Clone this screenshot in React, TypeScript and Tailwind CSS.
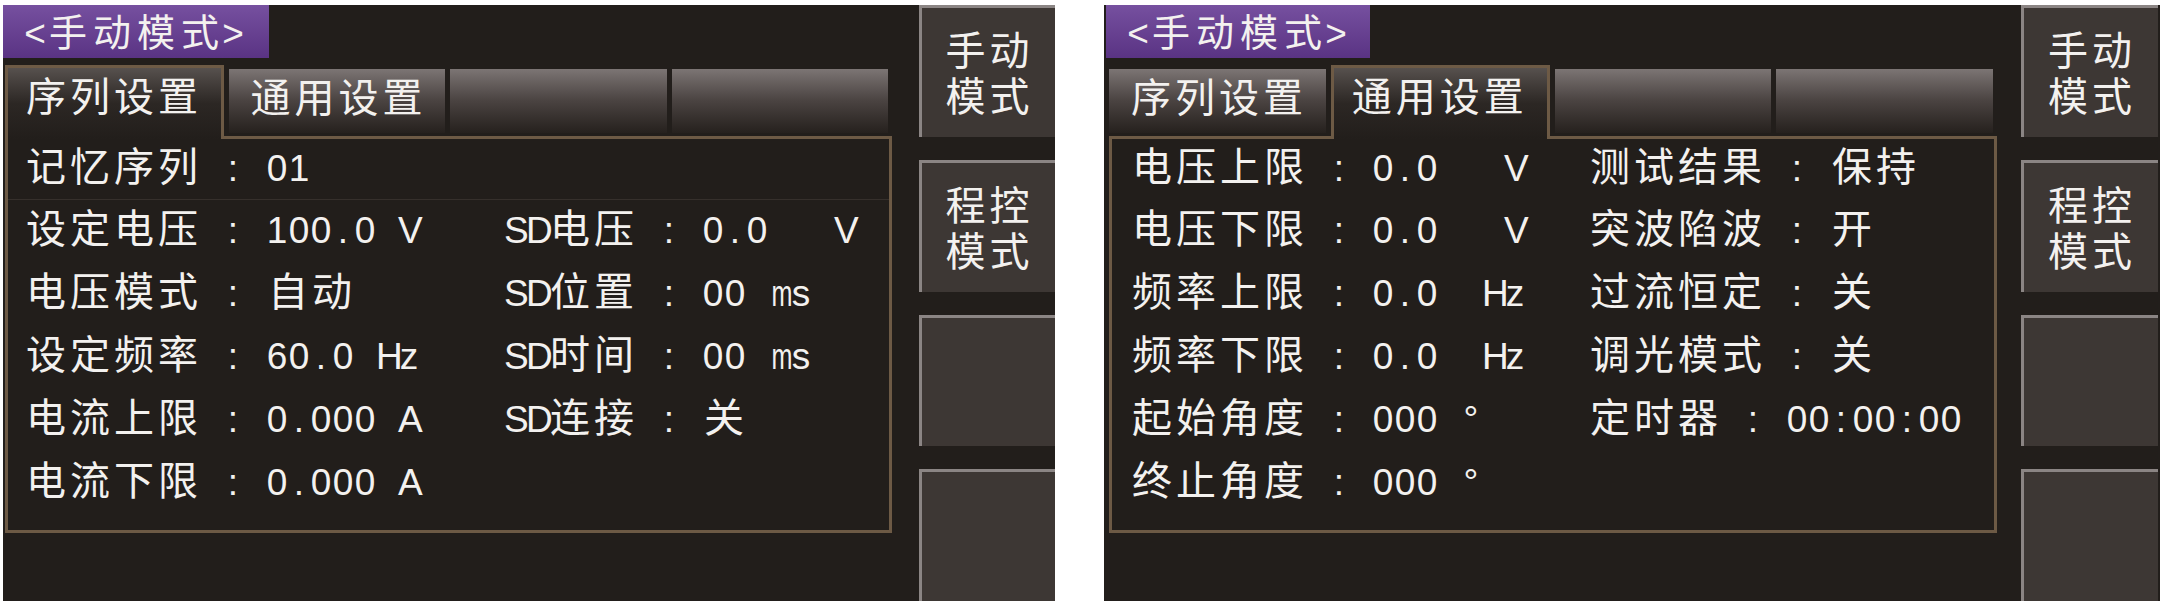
import React from "react";

type CellsProps = { text: string; small?: boolean };

function Cells({ text, small }: CellsProps) {
  return (
    <span className="whitespace-nowrap">
      {Array.from(text).map((ch, i) => {
        if (ch === " ") {
          return (
            <span key={i} className="inline-block w-[22px]">
              {"\u00a0"}
            </span>
          );
        }
        const wide = ch.charCodeAt(0) > 0x2e80;
        if (wide) {
          return (
            <span
              key={i}
              className={
                small
                  ? "inline-block w-[44px] text-center font-['Noto_Sans_CJK_SC',sans-serif] text-[38px]"
                  : "inline-block w-[44px] text-center font-['Noto_Sans_CJK_SC',sans-serif] text-[40px]"
              }
            >
              {ch}
            </span>
          );
        }
        if (ch === "m") {
          return (
            <span
              key={i}
              className="inline-block w-[22px] text-center font-['Liberation_Sans',sans-serif] text-[37px] scale-x-[0.68]"
            >
              {ch}
            </span>
          );
        }
        return (
          <span
            key={i}
            className="inline-block w-[22px] text-center font-['Liberation_Sans',sans-serif] text-[37px]"
          >
            {ch}
          </span>
        );
      })}
    </span>
  );
}

function Tab({ label, active }: { label?: string; active?: boolean }) {
  if (active) {
    return (
      <div className="relative z-10 flex-1 h-[74px] -mb-[3px] border-l-[3px] border-t-[3px] border-r-[3px] border-[#6d5a45] bg-linear-to-b from-[#57514e] via-[#2c2724] to-[#221e1b] flex items-center pl-[16px] pb-[8px] leading-[44px]">
        {label ? <Cells text={label} /> : null}
      </div>
    );
  }
  return (
    <div className="flex-1 h-[64px] mb-[3px] bg-linear-to-b from-[#7c7574] via-[#4a4341] to-[#26211e] flex items-center pl-[20px] pb-[2px] leading-[44px]">
      {label ? <Cells text={label} /> : null}
    </div>
  );
}

function SideButton({ label }: { label?: string }) {
  return (
    <div className="flex-1 min-h-0 overflow-hidden bg-[#3d3734] border-l-[3px] border-t-[3px] border-[#8b8584] flex flex-col items-center pt-[17px]">
      {label ? (
        <p className="w-[100px] pl-[7px] break-all text-left leading-[46px] tracking-[4px] font-['Noto_Sans_CJK_SC',sans-serif] text-[40px]">
          {label}
        </p>
      ) : null}
    </div>
  );
}

type ScreenProps = {
  left: boolean;
  activeTab: number;
  rows: [string, string][];
  firstRow: [string, string];
  separator: boolean;
};

function Screen({ left, activeTab, rows, firstRow, separator }: ScreenProps) {
  const tabs = ["序列设置", "通用设置", "", ""];
  const col1 = left ? "w-[480px] shrink-0" : "w-[458px] shrink-0";
  return (
    <div
      className={
        left
          ? "w-[1052px] h-[596px] bg-[#221e1b] flex text-[#f3f1ef]"
          : "w-[1056px] h-[596px] bg-[#221e1b] flex text-[#f3f1ef]"
      }
    >
      <div className={left ? "w-[916px] flex flex-col" : "w-[917px] flex flex-col"}>
        <div
          className={
            left
              ? "w-[266px] h-[53px] bg-linear-to-b from-[#76509f] to-[#5a3384] flex items-center pl-[21px] pt-[6px]"
              : "ml-[2px] w-[264px] h-[53px] bg-linear-to-b from-[#76509f] to-[#5a3384] flex items-center pl-[21px] pt-[6px]"
          }
        >
          <div className="h-[44px] flex items-center leading-[44px]">
            <Cells text="<手动模式>" small />
          </div>
        </div>
        <div className={left ? "pl-[2px] w-[889px] mt-[7px]" : "pl-[5px] w-[893px] mt-[7px]"}>
          <div className="flex items-end gap-[5px] pr-[4px]">
            {tabs.map((t, i) => (
              <Tab key={i} label={t || undefined} active={i === activeTab} />
            ))}
          </div>
          <div
            className={
              left
                ? "relative z-0 h-[397px] border-[3px] border-[#6d5a45] bg-[#221e1b] pl-[16px]"
                : "relative z-0 h-[397px] border-[3px] border-[#6d5a45] bg-[#221e1b] pl-[18px]"
            }
          >
            <div className="h-[60px] flex items-center">
              <div className="leading-[44px] whitespace-nowrap flex">
                <div className={col1}>
                  <Cells text={firstRow[0]} />
                </div>
                <div>{firstRow[1] ? <Cells text={firstRow[1]} /> : null}</div>
              </div>
            </div>
            <div className={separator ? "h-px -ml-[16px] bg-[#36302c]" : "h-px"} />
            {rows.map((r, i) => (
              <div key={i} className="h-[63px] flex items-center">
                <div className="leading-[44px] whitespace-nowrap flex">
                  <div className={col1}>
                    <Cells text={r[0]} />
                  </div>
                  <div>{r[1] ? <Cells text={r[1]} /> : null}</div>
                </div>
              </div>
            ))}
          </div>
        </div>
      </div>
      <div
        className={
          left
            ? "w-[136px] flex flex-col gap-[23px]"
            : "w-[137px] flex flex-col gap-[23px]"
        }
      >
        <SideButton label="手动模式" />
        <SideButton label="程控模式" />
        <SideButton />
        <SideButton />
      </div>
    </div>
  );
}

export default function App() {
  return (
    <div className="w-[2163px] h-[606px] bg-white flex pt-[5px] pl-[3px] gap-[49px] overflow-hidden">
      <Screen
        left
        activeTab={0}
        separator
        firstRow={["记忆序列 : 01", ""]}
        rows={[
          ["设定电压 : 100.0 V", "SD电压 : 0.0   V"],
          ["电压模式 : 自动", "SD位置 : 00 ms"],
          ["设定频率 : 60.0 Hz", "SD时间 : 00 ms"],
          ["电流上限 : 0.000 A", "SD连接 : 关"],
          ["电流下限 : 0.000 A", ""],
        ]}
      />
      <Screen
        left={false}
        activeTab={1}
        separator={false}
        firstRow={["电压上限 : 0.0   V", "测试结果 : 保持"]}
        rows={[
          ["电压下限 : 0.0   V", "突波陷波 : 开"],
          ["频率上限 : 0.0  Hz", "过流恒定 : 关"],
          ["频率下限 : 0.0  Hz", "调光模式 : 关"],
          ["起始角度 : 000 °", "定时器 : 00:00:00"],
          ["终止角度 : 000 °", ""],
        ]}
      />
    </div>
  );
}
